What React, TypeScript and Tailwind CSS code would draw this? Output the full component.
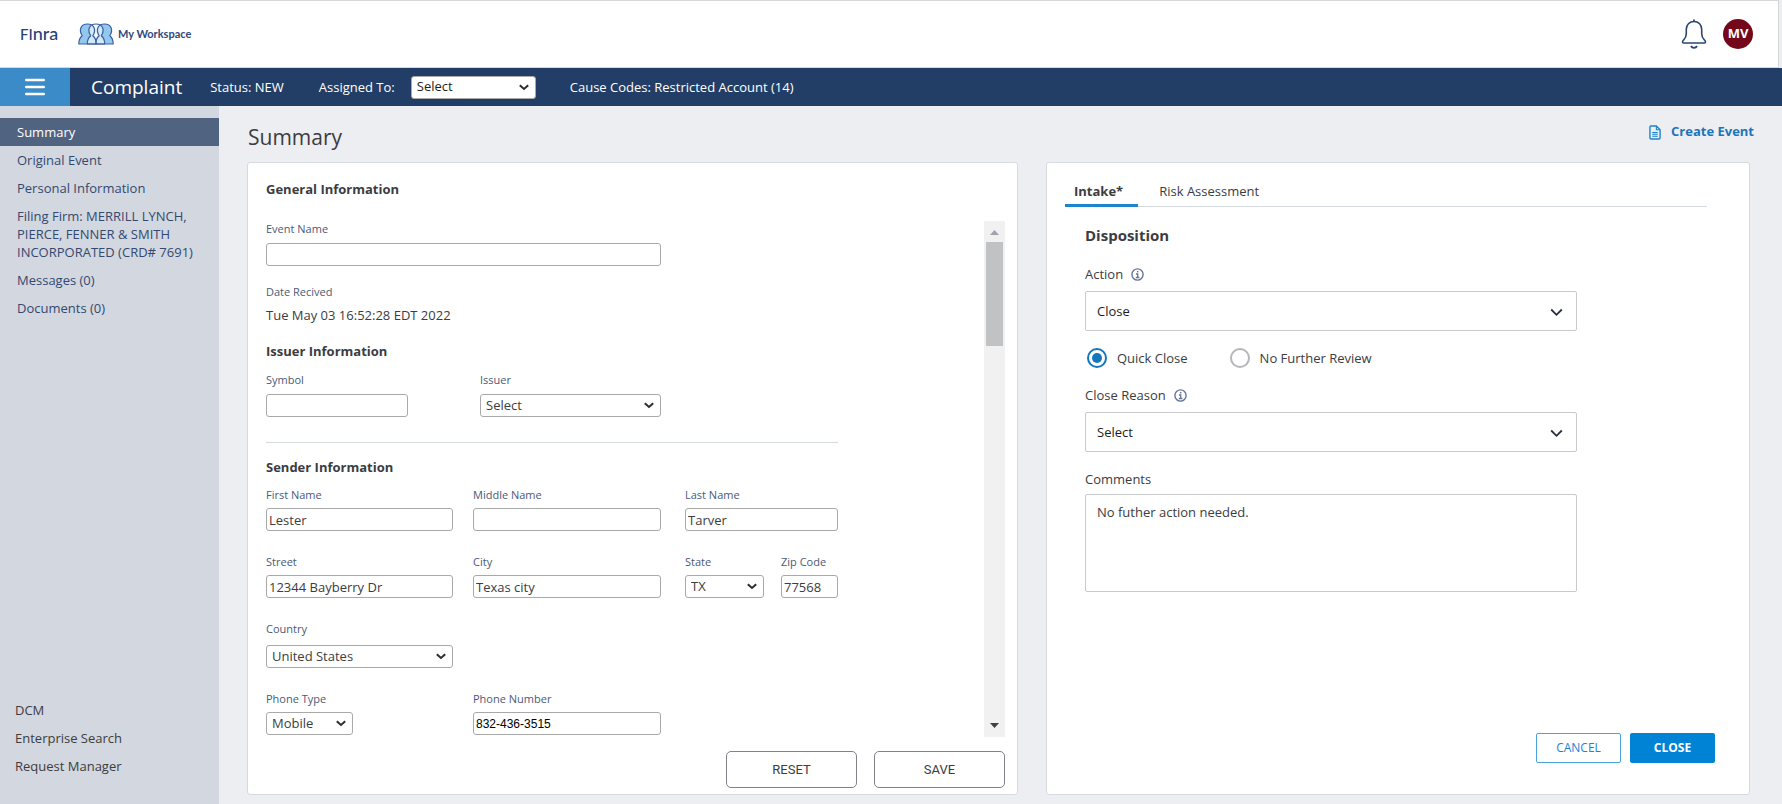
import React, { useState } from "react";

const sideLinks = [
  "Original Event",
  "Personal Information",
  "Filing Firm: MERRILL LYNCH, PIERCE, FENNER & SMITH INCORPORATED (CRD# 7691)",
  "Messages (0)",
  "Documents (0)",
];

const toolLinks = ["DCM", "Enterprise Search", "Request Manager"];

// ----------------------------------------------------
// Icons
// ----------------------------------------------------
const personPath =
  "M.8 21C.8 16.500 2 14.500 4.200 12.800 .6 7 2.600 1 9.500 1S18.400 7 14.800 12.800C17 14.500 18.200 16.500 18.200 21z";

function WorkspaceIcon() {
  return (
    <svg width="36" height="22" viewBox="0 0 36 22" fill="none" strokeLinejoin="round" aria-hidden="true">
      <path d={personPath} fill="#93c8ee" />
      <path d={personPath} fill="#93c8ee" transform="translate(17 0)" />
      <path d={personPath} fill="#e6f4fd" fillOpacity=".75" transform="translate(8.500 0)" />
      <g stroke="#3d5f9e" strokeWidth="1.200">
        <path d={personPath} />
        <path d={personPath} transform="translate(8.500 0)" />
        <path d={personPath} transform="translate(17 0)" />
      </g>
    </svg>
  );
}

function BellIcon() {
  return (
    <svg width="26" height="30" viewBox="0 0 26 30" fill="none" stroke="#2b4570" aria-hidden="true">
      <path
        d="M13 2.500c-4.600 0-7.700 3.300-7.700 7.700v4.300c0 3-.8 4.600-2.600 6.300C1 22.500 1.200 24 2.600 24h20.800c1.400 0 1.600-1.500-.1-3.200-1.800-1.700-2.600-3.300-2.600-6.300v-4.300c0-4.400-3.100-7.700-7.700-7.700z"
        strokeWidth="1.600"
      />
      <path d="M13 .5v2" strokeWidth="1.800" />
      <path d="M10 27c.6 1.300 1.600 1.900 3 1.900s2.400-.6 3-1.900" strokeWidth="1.800" />
    </svg>
  );
}

function FileIcon() {
  return (
    <svg width="12" height="15" viewBox="0 0 13 16" fill="none" stroke="#1b84cc" aria-hidden="true">
      <path d="M2 1h6l4 4v8.700c0 .7-.5 1.300-1.200 1.300H2.200C1.500 15 1 14.400 1 13.700V2.200C1 1.500 1.400 1 2 1z" strokeWidth="1.500" />
      <path d="M8 1v4h4" strokeWidth="1.200" />
      <path d="M3.500 8h6M3.500 10h6M3.500 12h6" strokeWidth="1.100" />
    </svg>
  );
}

function InfoIcon() {
  return (
    <svg width="13" height="13" viewBox="0 0 13 13" fill="none" stroke="#66749b" aria-hidden="true">
      <circle cx="6.500" cy="6.500" r="5.600" strokeWidth="1.400" />
      <path d="M5 6h1.700v3.500M4.800 9.500h3.600" strokeWidth="1.300" />
      <path d="M5.900 3.700h1.500" strokeWidth="1.500" />
    </svg>
  );
}

// ----------------------------------------------------
// Form pieces
// ----------------------------------------------------
const inputClass =
  "h-[23px] w-full rounded-[3px] border border-[#a9a9a9] bg-white px-[2px] text-[13px] text-[#3c3c41]";

function Field({
  id,
  label,
  className = "gap-[5px]",
  children,
}: {
  id: string;
  label: string;
  className?: string;
  children: React.ReactNode;
}) {
  return (
    <div className={`flex flex-col ${className}`}>
      <label htmlFor={id} className="text-[11px] leading-4 text-[#4b5a76]">
        {label}
      </label>
      {children}
    </div>
  );
}

function SmallSelect({
  id,
  options,
  className = "text-[#3c3c41]",
}: {
  id: string;
  options: string[];
  className?: string;
}) {
  return (
    <div className="relative">
      <select
        id={id}
        className={`block h-[23px] w-full appearance-none rounded-[3px] border border-[#a9a9a9] bg-white pl-[5px] text-[13px] ${className}`}
      >
        {options.map((option) => (
          <option key={option}>{option}</option>
        ))}
      </select>
      <svg
        className="pointer-events-none absolute top-2 right-[7px]"
        width="10"
        height="7"
        viewBox="0 0 10 7"
        fill="none"
        stroke="#2b2d33"
        strokeWidth="2"
        aria-hidden="true"
      >
        <path d="M.8 1.200 5 5l4.200-3.800" />
      </svg>
    </div>
  );
}

function LargeSelect({ id, options }: { id: string; options: string[] }) {
  return (
    <div className="relative mt-2">
      <select
        id={id}
        className="block h-10 w-full appearance-none rounded-[2px] border border-[#c8cacc] bg-white pl-[11px] text-[13px] text-[#1d1d20]"
      >
        {options.map((option) => (
          <option key={option}>{option}</option>
        ))}
      </select>
      <svg
        className="pointer-events-none absolute top-[17px] right-[14px]"
        width="13"
        height="9"
        viewBox="0 0 13 9"
        fill="none"
        stroke="#2a2f3d"
        strokeWidth="1.800"
        aria-hidden="true"
      >
        <path d="M1.200 1.500 6.500 6.800l5.300-5.300" />
      </svg>
    </div>
  );
}

function ReviewOption({
  label,
  checked,
  onChange,
}: {
  label: string;
  checked: boolean;
  onChange: () => void;
}) {
  return (
    <label className="flex items-center gap-[10px]">
      <input
        type="radio"
        name="review"
        checked={checked}
        onChange={onChange}
        className="h-5 w-5 appearance-none rounded-full border-2 border-[#b4b6ba] bg-white bg-clip-content p-[3px] checked:border-[#1477bc] checked:bg-[#1477bc]"
      />
      {label}
    </label>
  );
}

// ----------------------------------------------------
// Left card
// ----------------------------------------------------
function GeneralInformation() {
  return (
    <section className="flex flex-col rounded-[3px] border border-[#d5dae1] bg-white pt-[17px] pr-3 pb-[6px] pl-[18px]">
      <h2 className="text-[13px] leading-[18px] font-bold">General Information</h2>
      <div className="mt-[23px] flex flex-1 justify-between">
        <div className="w-[572px]">
          <Field id="event-name" label="Event Name" className="w-[395px] gap-[6px]">
            <input id="event-name" className={inputClass} />
          </Field>

          <p className="mt-[18px] text-[11px] leading-4 text-[#4b5a76]">Date Recived</p>
          <p className="mt-[6px] text-[13px] leading-[18px]">Tue May 03 16:52:28 EDT 2022</p>

          <h3 className="mt-[18px] text-[13px] leading-[18px] font-bold">Issuer Information</h3>
          <div className="mt-3 flex w-[395px] justify-between">
            <Field id="symbol" label="Symbol" className="w-[142px] gap-[6px]">
              <input id="symbol" className={inputClass} />
            </Field>
            <Field id="issuer" label="Issuer" className="w-[181px] gap-[6px]">
              <SmallSelect id="issuer" options={["Select"]} />
            </Field>
          </div>

          <hr className="mt-[25px] border-[#d5dae1]" />

          <h3 className="mt-[15px] text-[13px] leading-[18px] font-bold">Sender Information</h3>
          <div className="mt-[11px] grid grid-cols-[187px_192px_153px] gap-x-5 gap-y-[23px]">
            <Field id="first-name" label="First Name">
              <input id="first-name" defaultValue="Lester" className={inputClass} />
            </Field>
            <Field id="middle-name" label="Middle Name" className="w-[188px] gap-[5px]">
              <input id="middle-name" className={inputClass} />
            </Field>
            <Field id="last-name" label="Last Name">
              <input id="last-name" defaultValue="Tarver" className={inputClass} />
            </Field>

            <Field id="street" label="Street">
              <input id="street" defaultValue="12344 Bayberry Dr" className={inputClass} />
            </Field>
            <Field id="city" label="City" className="w-[188px] gap-[5px]">
              <input id="city" defaultValue="Texas city" className={inputClass} />
            </Field>
            <div className="flex justify-between">
              <Field id="state" label="State" className="w-[79px] gap-[5px]">
                <SmallSelect id="state" options={["TX"]} />
              </Field>
              <Field id="zip" label="Zip Code" className="w-[57px] gap-[5px]">
                <input id="zip" defaultValue="77568" className={inputClass} />
              </Field>
            </div>

            <Field id="country" label="Country" className="col-span-3 w-[187px] gap-2">
              <SmallSelect id="country" options={["United States"]} />
            </Field>

            <Field id="phone-type" label="Phone Type" className="w-[87px] gap-[5px]">
              <SmallSelect id="phone-type" options={["Mobile"]} />
            </Field>
            <Field id="phone-number" label="Phone Number" className="w-[188px] gap-[5px]">
              <input
                id="phone-number"
                defaultValue="832-436-3515"
                className="h-[23px] w-full rounded-[3px] border border-[#a9a9a9] bg-white px-[2px] font-['Liberation_Sans',sans-serif] text-xs text-black"
              />
            </Field>
          </div>
        </div>

        {/* Scroll rail */}
        <div className="flex w-[21px] flex-col items-center bg-[#f1f1f1]" aria-hidden="true">
          <svg width="21" height="21" viewBox="0 0 21 21" fill="#a3a1ae">
            <path d="M6 14h9l-4.500-5z" />
          </svg>
          <div className="h-[104px] w-[17px] bg-[#c1c2c3]" />
          <svg className="mt-auto" width="21" height="21" viewBox="0 0 21 21" fill="#3f3f44">
            <path d="M6 7h9l-4.500 5z" />
          </svg>
        </div>
      </div>
      <div className="mt-[14px] flex justify-end gap-[17px]">
        {["RESET", "SAVE"].map((name) => (
          <button
            key={name}
            type="button"
            className="h-[37px] w-[131px] rounded-[5px] border border-[#857f88] bg-white font-['Roboto',sans-serif] text-[13px]"
          >
            {name}
          </button>
        ))}
      </div>
    </section>
  );
}

// ----------------------------------------------------
// Right card
// ----------------------------------------------------
function IntakePanel() {
  const [review, setReview] = useState("quick");

  return (
    <section className="flex flex-col rounded-[3px] border border-[#d5dae1] bg-white pt-[19px] pb-[31px] pl-[18px] text-[13px] leading-[18px]">
      <div className="mr-[42px] flex border-b border-[#d5dae1]">
        <button
          type="button"
          className="-mb-px border-b-[3px] border-[#1b84cc] pr-[15px] pb-1 pl-[9px] font-bold"
        >
          Intake*
        </button>
        <button type="button" className="pb-[6px] pl-[21px]">
          Risk Assessment
        </button>
      </div>

      <div className="mt-[18px] w-[512px] pl-5">
        <h2 className="text-[15px] leading-5 font-bold">Disposition</h2>

        <div className="mt-5 flex items-center gap-2">
          <label htmlFor="action">Action</label>
          <InfoIcon />
        </div>
        <LargeSelect id="action" options={["Close"]} />

        <div className="mt-[17px] flex gap-[42px] pl-[2px]">
          <ReviewOption
            label="Quick Close"
            checked={review === "quick"}
            onChange={() => setReview("quick")}
          />
          <ReviewOption
            label="No Further Review"
            checked={review === "none"}
            onChange={() => setReview("none")}
          />
        </div>

        <div className="mt-[18px] flex items-center gap-2">
          <label htmlFor="close-reason">Close Reason</label>
          <InfoIcon />
        </div>
        <LargeSelect id="close-reason" options={["Select"]} />

        <label htmlFor="comments" className="mt-[18px] block">
          Comments
        </label>
        <textarea
          id="comments"
          defaultValue="No futher action needed."
          className="mt-[6px] block h-[98px] w-full resize-none rounded-[2px] border border-[#c8cacc] px-[11px] py-2"
        />
      </div>

      <div className="mt-auto flex justify-end gap-[9px] pr-[34px]">
        <button
          type="button"
          className="h-[30px] w-[85px] rounded-[2px] border border-[#4ba3dc] bg-white text-xs text-[#1b84cc]"
        >
          CANCEL
        </button>
        <button
          type="button"
          className="h-[30px] w-[85px] rounded-[2px] bg-[#0083d4] text-xs font-bold text-white"
        >
          CLOSE
        </button>
      </div>
    </section>
  );
}

export default function App() {
  return (
    <div className="flex min-h-screen flex-col bg-[#edeef2] font-['Open_Sans',sans-serif] text-[#3c3c41]">
      <header className="mr-[3px] flex h-[68px] items-center border border-l-0 border-[#d6d6d8] bg-white pr-[25px] pl-5 text-[#2f4a80]">
        <a
          href="#home"
          className="flex w-[58px] items-baseline pb-[3px] font-['Lato',sans-serif] leading-5 font-medium text-[#24427a]"
        >
          <span className="text-[15px]">FI</span>
          <span className="text-lg">nra</span>
        </a>
        <a href="#workspace" className="flex items-center gap-1">
          <WorkspaceIcon />
          <span className="font-['Lato',sans-serif] text-[11px] font-bold">My Workspace</span>
        </a>
        <button type="button" aria-label="Notifications" className="ml-auto">
          <BellIcon />
        </button>
        <span className="ml-4 flex h-[30px] w-[30px] items-center justify-center rounded-full bg-[#74081a] text-[13px] font-bold text-white">
          MV
        </span>
      </header>

      <div className="flex h-[38px] items-center bg-[#233e66] text-[13px] text-white">
        <button
          type="button"
          aria-label="Menu"
          className="flex h-full w-[70px] items-center justify-center bg-[#3a8bc7]"
        >
          <svg width="20" height="18" viewBox="0 0 20 18" stroke="#ffffff" strokeWidth="2.400" strokeLinecap="round">
            <path d="M1.200 2h17.600M1.200 9h17.600M1.200 16h17.600" />
          </svg>
        </button>
        <h1 className="ml-[21px] text-[19px]">Complaint</h1>
        <span className="ml-7 pt-[2px]">Status: NEW</span>
        <label htmlFor="assigned" className="ml-[35px] pt-[2px]">
          Assigned To:
        </label>
        <div className="ml-4 w-[125px]">
          <SmallSelect id="assigned" options={["Select"]} className="text-[#1d1d20]" />
        </div>
        <span className="ml-[34px] pt-[2px]">Cause Codes: Restricted Account (14)</span>
      </div>

      <div className="flex flex-1">
        <nav className="flex w-[219px] shrink-0 flex-col bg-[#d3d7df] pt-3 pb-6 text-[13px] leading-[18px] text-[#33496f]">
          <a href="#summary" className="bg-[#506381] py-[5px] pl-[17px] text-white">
            Summary
          </a>
          {sideLinks.map((link) => (
            <a key={link} href="#section" className="py-[5px] pr-4 pl-[17px]">
              {link}
            </a>
          ))}
          <div className="mt-auto flex flex-col text-[#3c3c41]">
            {toolLinks.map((link) => (
              <a key={link} href="#tool" className="py-[5px] pl-[15px]">
                {link}
              </a>
            ))}
          </div>
        </nav>

        <main className="flex min-w-0 flex-1 flex-col pr-8 pb-[9px] pl-7">
          <div className="-mr-1 flex h-14 items-center justify-between pl-px">
            <h2 className="pt-[6px] text-[21px] leading-7">Summary</h2>
            <a
              href="#create"
              className="flex items-center gap-[10px] pb-1 text-[13px] font-bold text-[#1b75bb]"
            >
              <FileIcon />
              Create Event
            </a>
          </div>
          <div className="grid flex-1 grid-cols-[771fr_704fr] gap-7">
            <GeneralInformation />
            <IntakePanel />
          </div>
        </main>
      </div>
    </div>
  );
}
